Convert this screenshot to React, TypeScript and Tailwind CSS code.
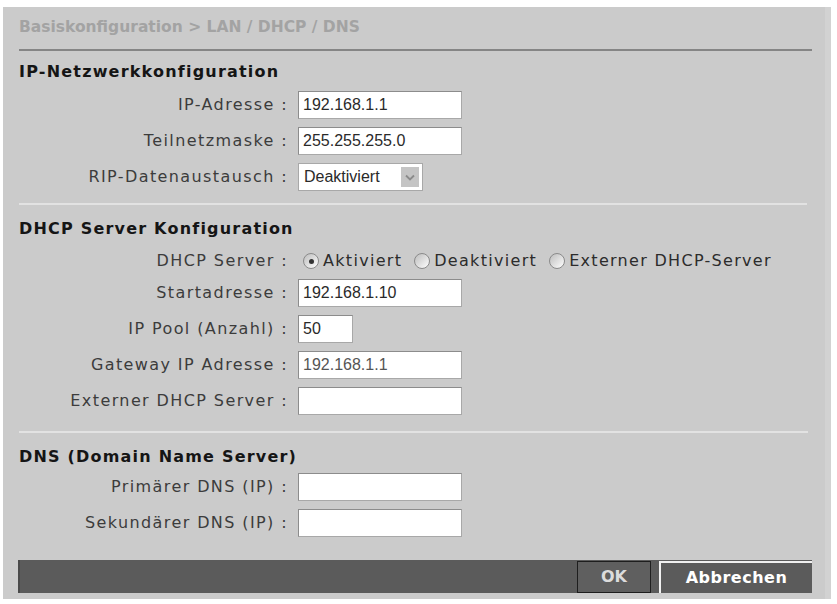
import React from 'react';

const labelFont = { fontFamily: '"DejaVu Sans", Verdana, sans-serif' };

// Simple sunken text field like the router UI
function Field({ value = '', width = 'w-[164px]', muted = false }: { value?: string; width?: string; muted?: boolean }) {
  return (
    <input
      type="text"
      defaultValue={value}
      readOnly
      className={`${width} h-[28px] bg-white border border-[#a8a8a8] border-t-[#8c8c8c] border-l-[#8c8c8c] px-[4px] text-[16px] font-['Liberation_Sans',Arial,sans-serif] outline-none ${
        muted ? 'text-[#555]' : 'text-[#2a2a2a]'
      }`}
    />
  );
}

function Row({ label, children }: { label: string; children: React.ReactNode }) {
  return (
    <div className="flex items-center h-9">
      <div className="w-[269px] shrink-0 text-right text-[16px] tracking-[1.4px] text-[#3c3c3c] font-['DejaVu_Sans',Verdana,sans-serif]">
        {label}
      </div>
      <div className="ml-[10px] flex items-center">{children}</div>
    </div>
  );
}

function Radio({ checked = false, label }: { checked?: boolean; label: string }) {
  return (
    <label className="flex items-center mr-[12px]">
      <span className="w-[16px] h-[16px] rounded-full border border-[#8a8a8a] bg-gradient-to-br from-[#bdbdbd] to-white flex items-center justify-center">
        {checked && <span className="w-[5px] h-[5px] rounded-full bg-[#333]" />}
      </span>
      <span className="ml-[4px] text-[16px] tracking-[1.3px] text-[#2c2c2c] font-['DejaVu_Sans',Verdana,sans-serif]">
        {label}
      </span>
    </label>
  );
}

function Heading({ children, className = '' }: { children: React.ReactNode; className?: string }) {
  return (
    <h2 className={`h-[20px] leading-[20px] text-[16px] font-bold tracking-[1.2px] text-[#151515] font-['DejaVu_Sans',Verdana,sans-serif] ${className}`}>
      {children}
    </h2>
  );
}

export default function App() {
  return (
    <div className="w-[837px] h-[604px] bg-white pt-[7px] pl-[3px]" style={labelFont}>
      <div className="w-[828px] h-[592px] bg-[#cbcbcb] border-r-[6px] border-r-[#d2d2d2] pl-[16px] pr-[13px] pt-[10px]">
        {/* breadcrumb */}
        <div className="h-[20px] leading-[20px] text-[15.5px] font-bold text-[#a3a3a3] font-['DejaVu_Sans',Verdana,sans-serif]">
          Basiskonfiguration &gt; LAN / DHCP / DNS
        </div>
        <div className="mt-[12px] h-[2px] bg-[#858585]" />

        {/* IP */}
        <Heading className="mt-[11px]">IP-Netzwerkkonfiguration</Heading>
        <div className="mt-[5px]">
          <Row label="IP-Adresse :">
            <Field value="192.168.1.1" />
          </Row>
          <Row label="Teilnetzmaske :">
            <Field value="255.255.255.0" />
          </Row>
          <Row label="RIP-Datenaustausch :">
            <div className="w-[125px] h-[28px] bg-white border border-[#a8a8a8] flex items-center justify-between pl-[5px] pr-[3px]">
              <span className="text-[16px] text-[#2a2a2a] font-['Liberation_Sans',Arial,sans-serif]">Deaktiviert</span>
              <span className="w-[18px] h-[20px] bg-[#c4c4c4] flex items-center justify-center">
                <svg width="10" height="7" viewBox="0 0 10 7">
                  <path d="M1 1.5 L5 5.5 L9 1.5" fill="none" stroke="#8a8a8a" strokeWidth="1.8" />
                </svg>
              </span>
            </div>
          </Row>
        </div>
        <div className="mt-[8px] mr-[5px] h-[2px] bg-[#e2e2e2]" />

        {/* DHCP */}
        <Heading className="mt-[14px]">DHCP Server Konfiguration</Heading>
        <div className="mt-[8px] flex items-center h-[28px]">
          <div className="w-[269px] shrink-0 text-right text-[16px] tracking-[1.4px] text-[#3c3c3c]">DHCP Server :</div>
          <div className="ml-[15px] flex items-center">
            <Radio checked label="Aktiviert" />
            <Radio label="Deaktiviert" />
            <Radio label="Externer DHCP-Server" />
          </div>
        </div>
        <Row label="Startadresse :">
          <Field value="192.168.1.10" />
        </Row>
        <Row label="IP Pool (Anzahl) :">
          <Field value="50" width="w-[55px]" />
        </Row>
        <Row label="Gateway IP Adresse :">
          <Field value="192.168.1.1" muted />
        </Row>
        <Row label="Externer DHCP Server :">
          <Field />
        </Row>
        <div className="mt-[12px] mr-[4px] h-[2px] bg-[#e2e2e2]" />

        {/* DNS */}
        <Heading className="mt-[14px]">DNS (Domain Name Server)</Heading>
        <div className="mt-[2px]">
          <Row label="Primärer DNS (IP) :">
            <Field />
          </Row>
          <Row label="Sekundärer DNS (IP) :">
            <Field />
          </Row>
        </div>

        {/* footer */}
        <div className="mt-[19px] -ml-[1px] h-[33px] bg-[#5b5b5b] border-l-2 border-l-[#4a4a4a] flex justify-end items-stretch">
          <button className="mt-[1px] w-[74px] border border-[#1e1e1e] bg-[#5f5f5f] text-[#dcdcdc] text-[16px] font-bold font-['DejaVu_Sans',Verdana,sans-serif]">
            OK
          </button>
          <div className="w-[8px]" />
          <button className="mt-[1px] w-[153px] border-t-2 border-l-2 border-t-[#f0f0f0] border-l-[#f0f0f0] bg-[#5b5b5b] text-white text-[16px] font-bold tracking-[0.5px] font-['DejaVu_Sans',Verdana,sans-serif]">
            Abbrechen
          </button>
        </div>
      </div>
    </div>
  );
}
